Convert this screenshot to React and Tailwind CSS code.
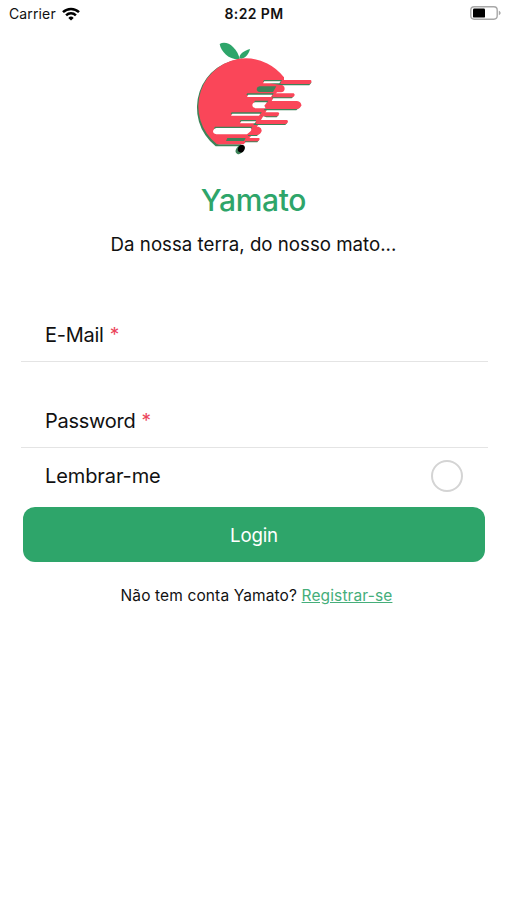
import { useState } from 'react';

function Wifi() {
  return (
    <svg viewBox="0 0 18 14" className="w-[18px] h-[14px]" fill="none" stroke="#000" strokeWidth="2.5">
      <path d="M1 5.2a11.4 11.4 0 0 1 16 0" />
      <path d="M4.1 8.3a7 7 0 0 1 9.8 0" />
      <path d="M9 13.6 6.3 10.9a3.9 3.9 0 0 1 5.4 0z" fill="#000" stroke="none" />
    </svg>
  );
}

function Battery() {
  return (
    <svg viewBox="0 0 32 14" className="w-8 h-3.5">
      <rect x="0.8" y="0.8" width="26.4" height="12.4" rx="3.4" fill="none" stroke="#a8a8a8" strokeWidth="1.4" />
      <rect x="3" y="2.6" width="12" height="9" rx="1.2" fill="#000" />
      <path d="M28.8 4.8c2.4.7 2.4 3.7 0 4.4z" fill="#a8a8a8" />
    </svg>
  );
}

function Logo() {
  return (
    <svg viewBox="0 0 420 375" className="ml-[3px] w-[140px] h-[125px]">
      <path d="M104 27c12-7 28-3 40 9 11 11 18 24 20 36-13 2-30-3-41-13-10-9-17-20-19-32z" fill="#2ea56a" />
      <path d="M163 70c0-13 12-22 32-28-3 14-12 26-26 29z" fill="#2ea56a" />

      {/* fruit */}
      <path d="M181 72A143 146 0 0 0 92 334H168V328H100z" fill="#3d8359" />
      <path d="M183 70A144 144 0 0 0 96 328H176L201 300 240 235 270 180 297 140V127A144 144 0 0 0 183 70z" fill="#fa4659" />

      {/* streaks: green shadow, then the red bar */}
      <g fill="#3d8359">
        <path d="M240 142H380L373 151H290z" />
        <path d="M262 184H326L320 190H262z" />
        <path d="M242 217H344L334 226H236z" />
        <path d="M226 240H281L275 247H244z" />
        <path d="M206 263H307L301 270H206z" />
        <path d="M186 294H224L216 303H190z" />
        <path d="M180 315H222L217 322H180z" />
      </g>
      <g fill="#fa4659">
        <path d="M290 135H377Q382 137 378 143L374 147H286z" />
        <path d="M275 150H292Q300 155 299 162 297 172 288 172H266z" />
        <path d="M268 175H326Q331 178 328 183L323 187H262z" />
        <path d="M252 198H336Q349 200 349 211 346 222 335 222H240z" />
        <path d="M236 232H280Q285 235 281 240L277 244H228z" />
        <path d="M220 255H306Q311 258 308 262L303 267H212z" />
        <path d="M196 275H221Q231 279 230 288 226 300 214 300H184z" />
        <path d="M174 309H222Q226 312 222 316L218 319H168z" />
      </g>

      {/* gaps cut into the fruit */}
      <g fill="#3d8359">
        <path d="M237 135H291L288 140H234z" />
        <path d="M187 175H266L263 180H184z" />
        <path d="M210 197H250L246 203H206z" />
        <path d="M140 232H230L227 237H137z" />
        <path d="M167 255H214L211 260H164z" />
        <path d="M90 275H202L198 281H86z" />
        <path d="M224 154H274L264 171H224Q215 170 215 162 216 155 224 154z" />
        <path d="M127 309H182L177 318H123z" />
      </g>
      <g fill="#fff">
        <path d="M238 139H287L283 145H234z" />
        <path d="M190 179H262L258 186H186z" />
        <path d="M212 202H246L238 212 242 220H213Q202 218 202 210 203 202 212 202z" />
        <path d="M142 236H226L222 242H138z" />
        <path d="M169 259H213L209 265H165z" />
        <path d="M94 279H197Q202 285 194 291L186 298H94Q84 296 84 288 86 280 94 279z" />
      </g>

      <ellipse cx="163" cy="345" rx="10" ry="13" transform="rotate(32 163 345)" fill="#3d8359" />
      <ellipse cx="169" cy="341" rx="10" ry="12" transform="rotate(25 169 341)" fill="#000" />
    </svg>
  );
}

function Field({ label, type, className }) {
  return (
    <label className={`flex ml-[21px] mr-[19px] pl-6 border-b border-[#e4e4e4] text-[20px] leading-6 ${className}`}>
      <span className="tracking-[-0.25px]">{label}</span>
      <span className="ml-1.5 text-[19px] text-[#eb445a]">*</span>
      <input type={type} className="flex-1 min-w-0 outline-none bg-transparent" />
    </label>
  );
}

export default function App() {
  const [remember, setRemember] = useState(false);

  return (
    <div className="flex flex-col w-full h-screen overflow-hidden bg-white text-[#111] font-['Inter','Liberation_Sans',sans-serif]">
      <header className="grid grid-cols-3 items-center h-[27px] pl-[9px] pr-[5px] text-[14px] leading-none">
        <div className="flex items-center gap-1.5">
          <span className="tracking-[0.13px]">Carrier</span>
          <Wifi />
        </div>
        <span className="pr-[3px] text-center font-semibold tracking-[0.4px]">8:22 PM</span>
        <div className="flex justify-end pb-px">
          <Battery />
        </div>
      </header>

      <main className="flex flex-col">
        <div className="flex flex-col items-center pt-2">
          <Logo />
          <h1 className="mt-[22px] text-[30px] leading-9 tracking-[-0.3px] font-medium text-[#2ea56a]">Yamato</h1>
          <p className="mt-[15px] text-[18.7px] leading-6">Da nossa terra, do nosso mato...</p>
        </div>

        <form className="flex flex-col" onSubmit={e => e.preventDefault()}>
          <Field label="E-Mail" type="email" className="mt-[52px] h-[53px] pt-[14px]" />
          <Field label="Password" type="password" className="mt-[33px] h-[53px] pt-[14px]" />

          <div className="flex items-center justify-between h-14 pl-[45px] pr-11 text-[20px] tracking-[-0.1px]">
            <span>Lembrar-me</span>
            <button
              type="button"
              role="checkbox"
              aria-checked={remember}
              aria-label="Lembrar-me"
              onClick={() => setRemember(!remember)}
              className={`w-8 h-8 rounded-full border-2 border-[#d4d4d4] ${remember ? 'bg-[#2ea56a]' : 'bg-white'}`}
            />
          </div>

          <button type="submit" className="mt-[3px] ml-[23px] mr-[22px] h-[55px] pt-[3px] rounded-xl bg-[#2ea56a] text-[18.7px] tracking-[-0.2px] text-white">
            Login
          </button>
        </form>

        <p className="mt-[22px] pl-1.5 text-center text-[15.5px] leading-6 tracking-[0.12px]">
          Não tem conta Yamato? <a href="#" className="text-[#45ae7a] underline">Registrar-se</a>
        </p>
      </main>
    </div>
  );
}
